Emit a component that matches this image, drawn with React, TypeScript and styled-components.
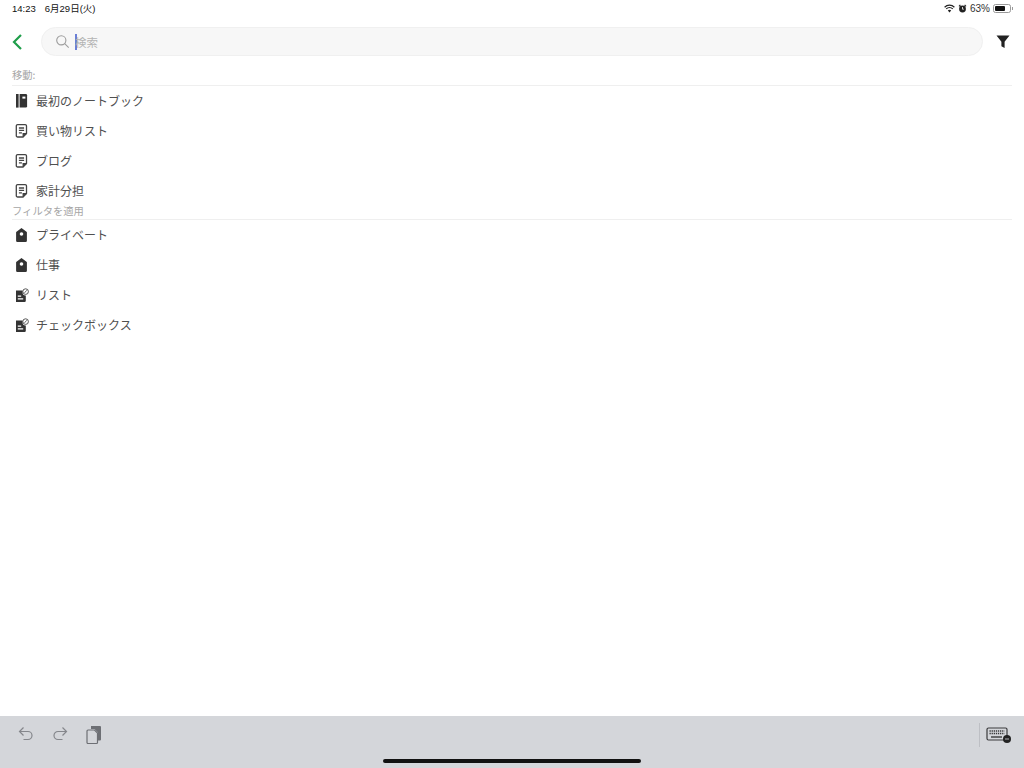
import React from "react";
import styled, { createGlobalStyle } from "styled-components";

const GlobalStyle = createGlobalStyle`
  html, body {
    margin: 0;
    padding: 0;
    background: #fff;
  }
  body {
    font-family: "Noto Sans CJK JP", "Liberation Sans", sans-serif;
  }
`;

type IconKind = "notebook" | "note" | "tag" | "attach";

type Row = {
  icon: IconKind;
  title: string;
};

const moveRows: Row[] = [
  { icon: "notebook", title: "最初のノートブック" },
  { icon: "note", title: "買い物リスト" },
  { icon: "note", title: "ブログ" },
  { icon: "note", title: "家計分担" },
];

const filterRows: Row[] = [
  { icon: "tag", title: "プライベート" },
  { icon: "tag", title: "仕事" },
  { icon: "attach", title: "リスト" },
  { icon: "attach", title: "チェックボックス" },
];

const RowIcon = ({ kind }: { kind: IconKind }) => {
  if (kind === "notebook") {
    return (
      <svg width="14" height="16" viewBox="0 0 14 16">
        <rect x="1" y="1" width="2.6" height="13.6" fill="#333" />
        <path d="M4.6 1h6.2a1.3 1.3 0 0 1 1.3 1.3v11a1.3 1.3 0 0 1-1.3 1.3H4.6z" fill="#333" />
        <rect x="7.4" y="3.6" width="3" height="2" fill="#fff" />
      </svg>
    );
  }
  if (kind === "note") {
    return (
      <svg width="14" height="16" viewBox="0 0 14 16" fill="none" stroke="#444" strokeWidth="1.3">
        <path d="M2.6 1.6h7.6a1.3 1.3 0 0 1 1.3 1.3V10.4L8 14H2.6a1.3 1.3 0 0 1-1.3-1.3V2.9A1.3 1.3 0 0 1 2.6 1.6z" />
        <path d="M3.9 5h5.2M3.9 7.4h5.2M3.9 9.8h3" />
        <path d="M11.5 10.6H8.2v3.2" fill="#444" />
      </svg>
    );
  }
  if (kind === "tag") {
    return (
      <svg width="14" height="16" viewBox="0 0 14 16">
        <path d="M6.5 1l5 3.8a1 1 0 0 1 .4.8v8.1a1.3 1.3 0 0 1-1.3 1.3H2.4a1.3 1.3 0 0 1-1.3-1.3V5.6a1 1 0 0 1 .4-.8z" fill="#333" />
        <circle cx="6.5" cy="7" r="1.8" fill="#fff" />
      </svg>
    );
  }
  return (
    <svg width="14" height="16" viewBox="0 0 14 16">
      <path d="M1 3.4h6.6v2.2a3 3 0 0 0 3.2 3v5.2a1.2 1.2 0 0 1-1.2 1.2H1z" fill="#333" />
      <path d="M2.8 9.2h3.4M2.8 11.8h5.4" stroke="#fff" strokeWidth="1.2" />
      <circle cx="10.6" cy="4.6" r="2.8" fill="none" stroke="#444" strokeWidth="0.9" />
      <path d="M9.5 5.9l2.2-2.6" stroke="#444" strokeWidth="0.8" />
    </svg>
  );
};

const App = () => {
  return (
    <Page>
      <GlobalStyle />
      <StatusBar>
        <StatusLeft>
          <span>14:23</span>
          <span>6月29日(火)</span>
        </StatusLeft>
        <StatusRight>
          <svg width="11" height="9" viewBox="0 0 11 9">
            <path d="M.6 3.2a7 7 0 0 1 9.8 0M2.2 4.9a4.7 4.7 0 0 1 6.6 0" fill="none" stroke="#222" strokeWidth="1.2" />
            <path d="M5.5 8.4L3.8 6.5a2.5 2.5 0 0 1 3.4 0z" fill="#222" />
          </svg>
          <svg width="9" height="9" viewBox="0 0 9 9">
            <circle cx="4.5" cy="5" r="3.4" fill="#222" />
            <path d="M1 2.3L2.4.9M8 2.3L6.6.9" stroke="#222" strokeWidth="1.2" />
            <path d="M4.5 3v2.2h1.3" stroke="#fff" strokeWidth="0.8" fill="none" />
          </svg>
          <Percent>63%</Percent>
          <Battery>
            <BatteryFill $level={70} />
          </Battery>
        </StatusRight>
      </StatusBar>

      <SearchRow>
        <BackButton>
          <svg width="12" height="18" viewBox="0 0 12 18" fill="none">
            <path d="M10 2L3 9l7 7" stroke="#1f9e4a" strokeWidth="2.2" />
          </svg>
        </BackButton>
        <SearchBox>
          <svg width="15" height="15" viewBox="0 0 15 15" fill="none" stroke="#9c9c9c" strokeWidth="1.1">
            <circle cx="6.3" cy="6.3" r="4.6" />
            <path d="M9.7 9.7l4 4" />
          </svg>
          <Caret />
          <Placeholder>検索</Placeholder>
        </SearchBox>
        <FilterButton>
          <svg width="14" height="15" viewBox="0 0 14 15">
            <path d="M.5 1.5h13L8.6 7.7V14L5.4 12.2V7.7z" fill="#222" />
          </svg>
        </FilterButton>
      </SearchRow>

      <Main>
        <SectionHeader $first>移動:</SectionHeader>
        {moveRows.map((el, i) => (
          <ListRow key={i}>
            <RowIcon kind={el.icon} />
            <RowTitle>{el.title}</RowTitle>
          </ListRow>
        ))}
        <SectionHeader>フィルタを適用</SectionHeader>
        {filterRows.map((el, i) => (
          <ListRow key={i}>
            <RowIcon kind={el.icon} />
            <RowTitle>{el.title}</RowTitle>
          </ListRow>
        ))}
      </Main>

      <Toolbar>
        <ToolGroup>
          <svg width="18" height="18" viewBox="0 0 18 18" fill="none" stroke="#85878c" strokeWidth="1.2">
            <path d="M6.5 3.5L2.5 7.5l4 4" />
            <path d="M2.5 7.5h8.5a4 4 0 0 1 0 8H6.5" />
          </svg>
          <svg width="18" height="18" viewBox="0 0 18 18" fill="none" stroke="#85878c" strokeWidth="1.2">
            <path d="M11.5 3.5l4 4-4 4" />
            <path d="M15.5 7.5H7a4 4 0 0 0 0 8h4.5" />
          </svg>
          <svg width="18" height="20" viewBox="0 0 18 20">
            <path d="M6 1h9a1 1 0 0 1 1 1v12.5a1 1 0 0 1-1 1h-2V7.5L9.5 4H6z" fill="#6d6f74" />
            <path d="M3 5h6.5L12.5 8v9.5a1 1 0 0 1-1 1H3a1 1 0 0 1-1-1V6a1 1 0 0 1 1-1z" fill="#d4d6da" stroke="#6d6f74" strokeWidth="1.2" />
          </svg>
        </ToolGroup>
        <KeyboardGroup>
          <svg width="26" height="18" viewBox="0 0 26 18">
            <rect x="1" y="2" width="20" height="12" rx="1.5" fill="none" stroke="#3a3a3c" strokeWidth="1.2" />
            <path d="M3.5 5h15M3.5 7.5h15" stroke="#3a3a3c" strokeWidth="1.4" strokeDasharray="1.3 0.8" />
            <path d="M5 11h11" stroke="#3a3a3c" strokeWidth="1.4" />
            <circle cx="21" cy="13" r="4" fill="#222" />
            <path d="M19 13h4" stroke="#d4d6da" strokeWidth="0.8" />
          </svg>
        </KeyboardGroup>
        <HomeIndicator />
      </Toolbar>
    </Page>
  );
};

export default App;

const Page = styled.div`
  display: flex;
  flex-direction: column;
  width: 1024px;
  height: 768px;
  overflow: hidden;
  background: #fff;
`;

const StatusBar = styled.div`
  display: flex;
  align-items: center;
  justify-content: space-between;
  height: 17px;
  padding: 0 12px 0 12px;
  font-size: 9.5px;
  color: #111;
`;

const StatusLeft = styled.div`
  display: flex;
  align-items: center;
  gap: 9px;
  line-height: 13px;
  font-family: "Liberation Sans", "Noto Sans CJK JP", sans-serif;
`;

const StatusRight = styled.div`
  display: flex;
  align-items: center;
  gap: 3px;
  padding-right: 1px;
`;

const Percent = styled.span`
  font-family: "Liberation Sans", sans-serif;
  font-size: 10px;
  color: #333;
`;

const Battery = styled.div`
  position: relative;
  box-sizing: border-box;
  width: 18px;
  height: 9px;
  padding: 1px;
  border: 1px solid #999;
  border-radius: 2.5px;
  &::after {
    content: "";
    position: absolute;
    top: 2px;
    right: -3px;
    width: 1px;
    height: 3px;
    background: #999;
  }
`;

const BatteryFill = styled.div<{ $level: number }>`
  width: ${({ $level }) => $level}%;
  height: 100%;
  background: #111;
  border-radius: 1px;
`;

const SearchRow = styled.div`
  display: flex;
  align-items: center;
  height: 29px;
  margin-top: 10px;
  padding: 0 14px 0 11px;
`;

const BackButton = styled.div`
  display: flex;
  align-items: center;
  width: 30px;
`;

const SearchBox = styled.div`
  display: flex;
  align-items: center;
  flex: 1;
  height: 29px;
  padding-left: 13px;
  background: #f7f7f7;
  border: 1px solid #f0f0f0;
  box-sizing: border-box;
  border-radius: 15px;
`;

const Caret = styled.div`
  width: 2px;
  height: 16px;
  margin: 0 -2px 0 5px;
  background: #6a7fd6;
`;

const Placeholder = styled.span`
  font-size: 11.5px;
  color: #b4b4b4;
`;

const FilterButton = styled.div`
  display: flex;
  justify-content: flex-end;
  width: 27px;
`;

const Main = styled.div`
  display: flex;
  flex-direction: column;
  flex: 1;
  padding: 0 12px;
`;

const SectionHeader = styled.div<{ $first?: boolean }>`
  display: flex;
  align-items: flex-end;
  box-sizing: border-box;
  height: ${({ $first }) => ($first ? "30px" : "14px")};
  padding-bottom: ${({ $first }) => ($first ? "4px" : "2px")};
  border-bottom: 1px solid #efefef;
  font-size: 10.3px;
  line-height: 13px;
  color: #a6a6a6;
`;

const ListRow = styled.div`
  display: flex;
  align-items: center;
  gap: 7px;
  height: 30px;
  padding-left: 3px;
  font-size: 12px;
  color: #505050;
`;

const RowTitle = styled.span`
  padding-bottom: 2px;
`;

const Toolbar = styled.div`
  position: relative;
  display: flex;
  justify-content: space-between;
  height: 52px;
  padding: 9px 12px 0 17px;
  box-sizing: border-box;
  background: #d4d6da;
`;

const ToolGroup = styled.div`
  display: flex;
  align-items: flex-start;
  gap: 16px;
  & > svg:nth-child(-n + 2) {
    margin-top: -1px;
  }
`;

const KeyboardGroup = styled.div`
  display: flex;
  align-items: center;
  align-self: flex-start;
  height: 24px;
  padding-left: 6px;
  border-left: 1px solid #bdbfc4;
  margin-top: -2px;
`;

const HomeIndicator = styled.div`
  position: absolute;
  left: 383px;
  bottom: 5px;
  width: 258px;
  height: 4px;
  border-radius: 2px;
  background: #111;
`;
